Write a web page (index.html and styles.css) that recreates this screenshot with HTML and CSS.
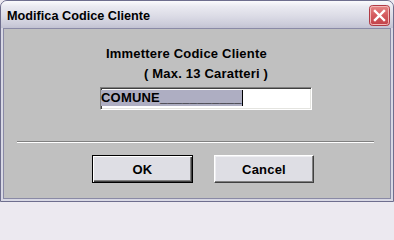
FILE: index.html
```html
<!DOCTYPE html>
<html>
<head>
<meta charset="utf-8">
<link rel="stylesheet" href="styles.css">
</head>
<body>
<div class="window">
  <div class="titlebar">
    <span class="title">Modifica Codice Cliente</span>
    <span class="close">
      <svg width="21" height="21" viewBox="0 0 21 21">
        <defs>
          <linearGradient id="cg" x1="0" y1="0" x2="0" y2="1">
            <stop offset="0" stop-color="#e88a8a"/>
            <stop offset="0.5" stop-color="#d45a5e"/>
            <stop offset="1" stop-color="#c04048"/>
          </linearGradient>
        </defs>
        <rect x="0.5" y="0.5" width="20" height="20" rx="3" fill="url(#cg)" stroke="#b03a44"/>
        <rect x="1.5" y="1.5" width="18" height="18" rx="2" fill="none" stroke="#f2b8b8" stroke-width="1"/>
        <path d="M6 6 L15 15 M15 6 L6 15" stroke="#ffffff" stroke-width="2.4" stroke-linecap="square"/>
      </svg>
    </span>
  </div>
  <div class="frame">
    <div class="client">
      <div class="form">
        <div class="label first">Immettere Codice Cliente</div>
        <div class="label second">( Max. 13 Caratteri )</div>
        <div class="input"><span class="sel">COMUNE___________</span></div>
      </div>
      <div class="sep"></div>
      <div class="buttons">
        <button class="btn default">OK</button>
        <button class="btn">Cancel</button>
      </div>
    </div>
  </div>
</div>
</body>
</html>
```
FILE: styles.css
```css
html, body {
  margin: 0;
  padding: 0;
  background: #ece9f0;
}
body {
  width: 394px;
  height: 202px;
  overflow: hidden;
  font-family: "Liberation Sans", Arial, sans-serif;
  color: #000;
}
.window {
  width: 394px;
  height: 202px;
  box-sizing: border-box;
  display: flex;
  flex-direction: column;
  border: 1px solid #6e6e8e;
  border-radius: 7px 7px 0 0;
  background: #c6c6d6;
  overflow: hidden;
}
.titlebar {
  height: 27px;
  box-sizing: border-box;
  padding: 2px 3px 0 6px;
  display: flex;
  align-items: center;
  justify-content: space-between;
  background: linear-gradient(#fbfbfd 0, #eaeaf1 20%, #dcdce6 55%, #cdcddb 85%, #c2c2d2 100%);
}
.title {
  font-weight: bold;
  font-size: 12.7px;
  color: #000;
}
.close {
  display: flex;
  width: 21px;
  height: 21px;
}
.frame {
  flex: 1;
  display: flex;
  padding: 0 2px 2px;
  background: #d8d8e4;
}
.client {
  flex: 1;
  display: flex;
  flex-direction: column;
  border: 1px solid #8a8aa6;
  background: #c0c0c0;
}
.form {
  width: 212px;
  margin: 15px 0 0 96px;
  display: flex;
  flex-direction: column;
}
.label {
  font-weight: bold;
  font-size: 13px;
  letter-spacing: 0.2px;
  line-height: 20px;
  white-space: nowrap;
}
.label.first {
  margin-left: 6px;
}
.label.second {
  text-align: center;
}
.input {
  margin-top: 3px;
  height: 23px;
  box-sizing: border-box;
  padding: 1px 0 0 0;
  background: #fff;
  border-top: 1px solid #808080;
  border-left: 1px solid #808080;
  border-right: 1px solid #ffffff;
  border-bottom: 1px solid #ffffff;
  box-shadow: inset 1px 1px 0 #404040, inset -1px -1px 0 #e4e4e0;
  display: flex;
  align-items: flex-start;
}
.sel {
  margin-top: 1px;
  height: 16px;
  line-height: 16px;
  font-weight: bold;
  font-size: 13px;
  letter-spacing: 0.2px;
  background: #aeaec2;
  border-right: 1px solid #000;
  white-space: nowrap;
}
.sep {
  margin: 31px 16px 0 13px;
  height: 1px;
  background: #808080;
  border-bottom: 1px solid #ffffff;
}
.buttons {
  margin: 12px 0 0 88px;
  display: flex;
  gap: 21px;
}
.btn {
  width: 100px;
  height: 28px;
  box-sizing: border-box;
  margin: 0;
  padding: 0;
  font-family: "Liberation Sans", Arial, sans-serif;
  font-weight: bold;
  font-size: 13px;
  letter-spacing: 0.2px;
  color: #000;
  background: #dedee4;
  border-top: 1px solid #ffffff;
  border-left: 1px solid #ffffff;
  border-right: 1px solid #404040;
  border-bottom: 1px solid #404040;
  box-shadow: inset -1px -1px 0 #808080, inset 1px 1px 0 #eeeef2;
}
.btn.default {
  width: 101px;
  border: 1px solid #000;
  box-shadow: inset 1px 1px 0 #ffffff, inset -1px -1px 0 #404040, inset -2px -2px 0 #808080;
}
```
